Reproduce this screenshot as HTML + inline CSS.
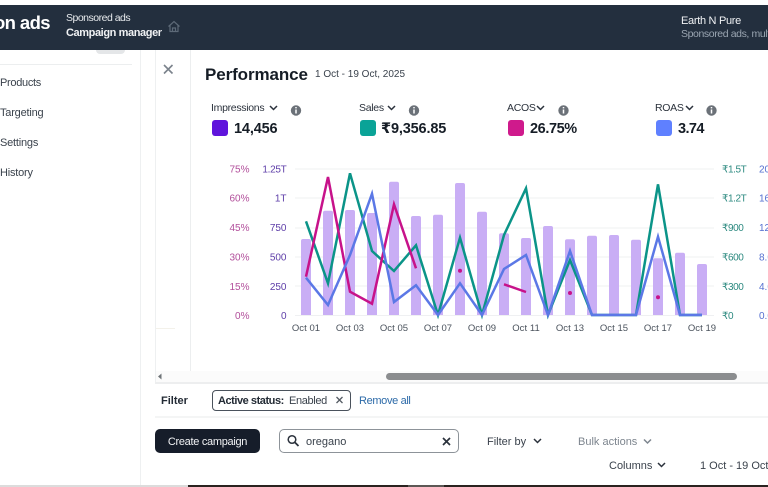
<!DOCTYPE html>
<html><head><meta charset="utf-8"><style>
html,body{margin:0;padding:0;background:#fff}
#p{position:relative;width:768px;height:487px;overflow:hidden;background:#fff;font-family:"Liberation Sans",sans-serif;color:#2b323c;filter:blur(.3px)}
.a{position:absolute;white-space:nowrap}
.t{position:absolute;white-space:nowrap;font-size:11px;line-height:14px;letter-spacing:-.2px}
.l{position:absolute;white-space:nowrap;top:101px;font-size:10.5px;line-height:14px;letter-spacing:-.3px}
.s{position:absolute;width:16px;height:16px;border-radius:3px;top:120px}
.v{position:absolute;top:121px;font-size:14.5px;line-height:17px;font-weight:bold;color:#161d26;white-space:nowrap;letter-spacing:-.15px}
svg{position:absolute;left:0;top:0;overflow:visible}
</style></head><body><div id="p">
<div class="a" style="left:0;top:5px;width:768px;height:45px;background:#232f3e"></div>
<div class="a" style="left:-26px;top:11px;width:76px;text-align:right;font-size:18.5px;line-height:24px;font-weight:bold;color:#fff;letter-spacing:-.6px">azon ads</div>
<div class="a" style="left:66px;top:11px;font-size:10.5px;line-height:14px;color:#e6e9ec;letter-spacing:-.5px">Sponsored ads</div>
<div class="a" style="left:66px;top:26px;font-size:11px;line-height:14px;font-weight:bold;color:#f0f2f4;letter-spacing:-.4px">Campaign manager</div>
<div class="a" style="left:681px;top:14px;font-size:11px;line-height:14px;color:#f0f2f4;letter-spacing:-.3px">Earth N Pure</div>
<div class="a" style="left:681px;top:27px;font-size:10.5px;line-height:14px;color:#9aa5b1;letter-spacing:-.4px">Sponsored ads, multiple</div>

<div class="a" style="left:96px;top:50px;width:29px;height:4px;background:#e4e6e8;border-radius:0 0 5px 5px"></div>
<div class="a" style="left:0;top:64px;width:132px;height:1px;background:#eceeef"></div>
<div class="a" style="left:140px;top:50px;width:1px;height:437px;background:#eef0f1"></div>
<div class="a" style="left:155px;top:50px;width:1px;height:333px;background:#eef0f1"></div>
<div class="a" style="left:190px;top:50px;width:1px;height:322px;background:#eceeef"></div>
<div class="a" style="left:156px;top:328px;width:19px;height:1px;background:#f3f1ea"></div>
<div class="t" style="left:0;top:76px;color:#3a424c;letter-spacing:-.3px">Products</div>
<div class="t" style="left:0;top:106px;color:#3a424c">Targeting</div>
<div class="t" style="left:0;top:136px;color:#3a424c">Settings</div>
<div class="t" style="left:0;top:166px;color:#3a424c">History</div>

<div class="a" style="left:205px;top:64px;font-size:17px;line-height:21px;font-weight:bold;color:#161d26;letter-spacing:-.1px">Performance</div>
<div class="a" style="left:315px;top:68px;font-size:10px;line-height:14px;color:#3a424c">1 Oct - 19 Oct, 2025</div>

<div class="l" style="left:211px">Impressions</div>
<div class="l" style="left:359px">Sales</div>
<div class="l" style="left:507px">ACOS</div>
<div class="l" style="left:655px">ROAS</div>
<div class="s" style="left:212px;background:#5f14dc"></div>
<div class="s" style="left:360px;background:#0aa397"></div>
<div class="s" style="left:508px;background:#cf1a8c"></div>
<div class="s" style="left:656px;background:#5f80ff"></div>
<div class="v" style="left:234px">14,456</div>
<div class="v" style="left:381px;font-family:'Liberation Sans','DejaVu Sans',sans-serif">₹9,356.85</div>
<div class="v" style="left:530px;letter-spacing:-.4px">26.75%</div>
<div class="v" style="left:678px;letter-spacing:-.6px">3.74</div>

<svg width="768" height="487" viewBox="0 0 768 487">
<path d="M168.500 26.500l5.500-5 5.500 5M170 25.500v6h8v-6M172.500 31.500v-3.500h3v3.500" fill="none" stroke="#5d6a78" stroke-width="1.200"/>
<path d="M164 65l8.500 8.500M172.500 65l-8.500 8.500" stroke="#7b838c" stroke-width="1.600" fill="none"/>
<g fill="none" stroke="#2b323c" stroke-width="1.500">
<path d="M270 106l3.500 3.500 3.500-3.500"/><path d="M388 106l3.500 3.500 3.500-3.500"/><path d="M537 106l3.500 3.500 3.500-3.500"/><path d="M686 106l3.500 3.500 3.500-3.500"/>
<path d="M534 439l3.500 3.500 3.500-3.500"/><path d="M658 463l3.500 3.500 3.500-3.500"/>
<path d="M644 439.500l3.500 3.500 3.500-3.500" stroke="#7d858e"/>
</g>
<g>
<circle cx="296" cy="110.500" r="5.200" fill="#6b7178"/><circle cx="414" cy="110.500" r="5.200" fill="#6b7178"/><circle cx="563.500" cy="110.500" r="5.200" fill="#6b7178"/><circle cx="711.500" cy="110.500" r="5.200" fill="#6b7178"/>
<path d="M296 109.500v4M414 109.500v4M563.500 109.500v4M711.500 109.500v4" stroke="#fff" stroke-width="1.500"/>
<path d="M296 107v1.400M414 107v1.400M563.500 107v1.400M711.500 107v1.400" stroke="#fff" stroke-width="1.500"/>
</g>
<g stroke="#eff0f2" stroke-width="1">
<path d="M295 169h419M295 198h419M295 228h419M295 257h419M295 286h419M295 315.500h419"/>
</g>
<g fill="#c9aef5">
<path d="M301 315V241a2 2 0 0 1 2-2h6a2 2 0 0 1 2 2V315z"/>
<path d="M323 315V212.700a2 2 0 0 1 2-2h6a2 2 0 0 1 2 2V315z"/>
<path d="M345 315V212a2 2 0 0 1 2-2h6a2 2 0 0 1 2 2V315z"/>
<path d="M367 315V215a2 2 0 0 1 2-2h6a2 2 0 0 1 2 2V315z"/>
<path d="M389 315V183.700a2 2 0 0 1 2-2h6a2 2 0 0 1 2 2V315z"/>
<path d="M411 315V218a2 2 0 0 1 2-2h6a2 2 0 0 1 2 2V315z"/>
<path d="M433 315V216.700a2 2 0 0 1 2-2h6a2 2 0 0 1 2 2V315z"/>
<path d="M455 315V185a2 2 0 0 1 2-2h6a2 2 0 0 1 2 2V315z"/>
<path d="M477 315V213.700a2 2 0 0 1 2-2h6a2 2 0 0 1 2 2V315z"/>
<path d="M499 315V235.300a2 2 0 0 1 2-2h6a2 2 0 0 1 2 2V315z"/>
<path d="M521 315V240a2 2 0 0 1 2-2h6a2 2 0 0 1 2 2V315z"/>
<path d="M543 315V228a2 2 0 0 1 2-2h6a2 2 0 0 1 2 2V315z"/>
<path d="M565 315V241.300a2 2 0 0 1 2-2h6a2 2 0 0 1 2 2V315z"/>
<path d="M587 315V237.700a2 2 0 0 1 2-2h6a2 2 0 0 1 2 2V315z"/>
<path d="M609 315V237a2 2 0 0 1 2-2h6a2 2 0 0 1 2 2V315z"/>
<path d="M631 315V241.700a2 2 0 0 1 2-2h6a2 2 0 0 1 2 2V315z"/>
<path d="M653 315V260.300a2 2 0 0 1 2-2h6a2 2 0 0 1 2 2V315z"/>
<path d="M675 315V254.700a2 2 0 0 1 2-2h6a2 2 0 0 1 2 2V315z"/>
<path d="M697 315V266a2 2 0 0 1 2-2h6a2 2 0 0 1 2 2V315z"/>
</g>
<g fill="none" stroke-width="2.500" stroke-linejoin="miter">
<polyline stroke="#0b9488" points="306,221.300 328,283.300 350,173.300 372,251 394,271 416,245.300 438,315 460,237.700 482,315 504,235 526,188.300 548,315 570,260 592,315 636,315 658,184.300 680,315 702,315"/>
<polyline stroke="#c7128a" points="306,276.700 328,177 350,291.700 372,303.700 394,204.300 416,268.300"/>
<polyline stroke="#c7128a" points="504,284.300 526,292"/>
<polyline stroke="#5b78e6" points="306,277.700 328,305 350,255 372,193.700 394,302 416,285.300 438,315 460,283.300 482,315 504,269 526,255 548,315 570,251 592,315 636,315 658,236.700 680,315 702,315"/>
</g>
<g fill="#c7128a"><circle cx="460" cy="270.700" r="2"/><circle cx="570" cy="293" r="2"/><circle cx="658" cy="297.300" r="2"/></g>
<g font-family="Liberation Sans, sans-serif" font-size="10">
<g fill="#b24f9b" text-anchor="end">
<text x="249.500" y="172.500">75%</text><text x="249.500" y="201.500">60%</text><text x="249.500" y="231">45%</text><text x="249.500" y="260.500">30%</text><text x="249.500" y="290">15%</text><text x="249.500" y="319">0%</text>
</g>
<g fill="#5e3ea8" text-anchor="end">
<text x="286.500" y="172.500" letter-spacing="-.3">1.25T</text><text x="286.500" y="201.500">1T</text><text x="286.500" y="231">750</text><text x="286.500" y="260.500">500</text><text x="286.500" y="290">250</text><text x="286.500" y="319">0</text>
</g>
<g fill="#2d8a80" font-family="Liberation Sans, DejaVu Sans, sans-serif" letter-spacing="-.4">
<text x="722" y="172.500">₹1.5T</text><text x="722" y="201.500">₹1.2T</text><text x="722" y="231">₹900</text><text x="722" y="260.500">₹600</text><text x="722" y="290">₹300</text><text x="722" y="319">₹0</text>
</g>
<g fill="#5570d0">
<text x="759" y="172.500">20.0</text><text x="759" y="201.500">16.0</text><text x="759" y="231">12.0</text><text x="759" y="260.500">8.00</text><text x="759" y="290">4.00</text><text x="759" y="319">0.00</text>
</g>
<g fill="#4a525c" text-anchor="middle" font-size="9.500" letter-spacing=".05">
<text x="306" y="331">Oct 01</text><text x="350" y="331">Oct 03</text><text x="394" y="331">Oct 05</text><text x="438" y="331">Oct 07</text><text x="482" y="331">Oct 09</text><text x="526" y="331">Oct 11</text><text x="570" y="331">Oct 13</text><text x="614" y="331">Oct 15</text><text x="658" y="331">Oct 17</text><text x="702" y="331">Oct 19</text>
</g>
</g>
</svg>

<div class="a" style="left:156px;top:371px;width:612px;height:11px;background:#fbfbfb"></div>
<div class="a" style="left:386px;top:373px;width:351px;height:7px;background:#8b8d8f;border-radius:4px"></div>
<div class="a" style="left:155px;top:382px;width:613px;height:2px;background:#edeeef"></div>
<div class="a" style="left:155px;top:416px;width:613px;height:2px;background:#f4f5f5"></div>

<div class="a" style="left:161px;top:394px;font-size:11px;line-height:14px;font-weight:bold;color:#232b35">Filter</div>
<div class="a" style="left:212px;top:390px;width:137px;height:19px;border:1.300px solid #4a525c;border-radius:4px;background:#fff"></div>
<div class="a" style="left:218px;top:394px;font-size:11px;line-height:14px;color:#232b35;font-weight:bold;letter-spacing:-.45px">Active status:</div>
<div class="a" style="left:289px;top:394px;font-size:11px;line-height:14px;color:#3a424c;letter-spacing:-.35px">Enabled</div>
<div class="a" style="left:359px;top:394px;font-size:11px;line-height:14px;color:#2c6aa8;letter-spacing:-.35px">Remove all</div>

<div class="a" style="left:155px;top:429px;width:105px;height:24px;background:#161d2a;border-radius:5px"></div>
<div class="a" style="left:155px;top:435px;width:105px;text-align:center;font-size:11px;line-height:14px;color:#f2f3f5;letter-spacing:-.3px">Create campaign</div>
<div class="a" style="left:279px;top:429px;width:178px;height:22px;border:1.300px solid #8d9399;border-radius:5px;background:#fff"></div>
<svg width="768" height="487">
<path d="M158 376.500l3.500-3v6z" fill="#6f7478"/>
<path d="M336.500 397l6 6M342.500 397l-6 6" stroke="#555c64" stroke-width="1.300" fill="none"/>
<circle cx="292" cy="439.500" r="3.800" fill="none" stroke="#2b323c" stroke-width="1.500"/>
<path d="M295 442.500l3.500 3.500" stroke="#2b323c" stroke-width="1.800"/>
<path d="M443 438l7 7M450 438l-7 7" stroke="#2b323c" stroke-width="1.700" fill="none"/>
</svg>
<div class="a" style="left:306px;top:435px;font-size:11px;line-height:14px;color:#3a424c">oregano</div>
<div class="a" style="left:487px;top:435px;font-size:11px;line-height:14px;color:#3a424c">Filter by</div>
<div class="a" style="left:578px;top:435px;font-size:11px;line-height:14px;color:#7d858e">Bulk actions</div>
<div class="a" style="left:609px;top:459px;font-size:11px;line-height:14px;color:#3a424c">Columns</div>
<div class="a" style="left:700px;top:459px;font-size:11px;line-height:14px;color:#3a424c">1 Oct - 19 Oct, 2025</div>

<div class="a" style="left:0;top:485px;width:188px;height:2px;background:#dcdcdc"></div>
<div class="a" style="left:188px;top:485px;width:580px;height:2px;background:#2a2320"></div>
<div class="a" style="left:408px;top:485px;width:36px;height:2px;background:#5c5855"></div>
</div></body></html>
